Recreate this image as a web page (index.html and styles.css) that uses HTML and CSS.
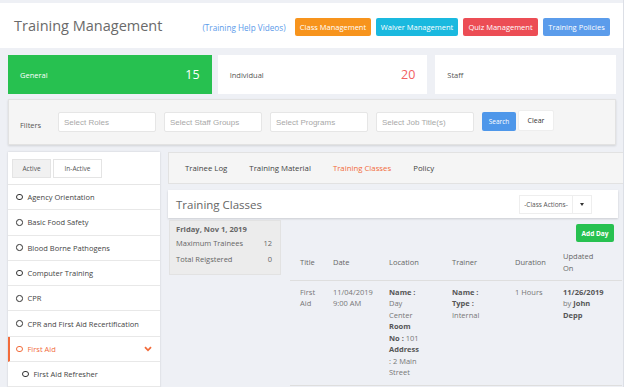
FILE: index.html
```html
<!DOCTYPE html>
<html lang="en">
<head>
    <meta charset="UTF-8">
    <meta name="viewport" content="width=device-width, initial-scale=1.0">
    <title>Training Management</title>
    <link rel="stylesheet" href="styles.css">
</head>
<body>
<div class="page">

    <div class="topbar">
        <h1>Training Management</h1>
        <a class="help-link" href="#">(Training Help Videos)</a>
        <div class="top-buttons">
            <button class="btn btn-orange">Class Management</button>
            <button class="btn btn-cyan">Waiver Management</button>
            <button class="btn btn-red">Quiz Management</button>
            <button class="btn btn-blue">Training Policies</button>
        </div>
    </div>

    <div class="content">
        <div class="stats">
            <div class="stat stat-general"><span>General</span><span class="stat-num">15</span></div>
            <div class="stat stat-individual"><span>Individual</span><span class="stat-num red">20</span></div>
            <div class="stat stat-staff"><span>Staff</span></div>
        </div>

        <div class="filters">
            <span class="filters-label">Filters</span>
            <input type="text" placeholder="Select Roles">
            <input type="text" placeholder="Select Staff Groups">
            <input type="text" placeholder="Select Programs">
            <input type="text" placeholder="Select Job Title(s)">
            <button class="btn-search">Search</button>
            <button class="btn-clear">Clear</button>
        </div>

        <div class="main">
            <div class="sidebar">
                <div class="toggle">
                    <button class="toggle-btn active">Active</button>
                    <button class="toggle-btn">In-Active</button>
                </div>
                <ul class="course-list">
                    <li><span class="dot"></span>Agency Orientation</li>
                    <li><span class="dot"></span>Basic Food Safety</li>
                    <li><span class="dot"></span>Blood Borne Pathogens</li>
                    <li><span class="dot"></span>Computer Training</li>
                    <li><span class="dot"></span>CPR</li>
                    <li><span class="dot"></span>CPR and First Aid Recertification</li>
                    <li class="selected"><span class="dot"></span>First Aid
                        <svg class="chevron" width="8" height="6" viewBox="0 0 8 6"><path d="M1 1.2 L4 4.3 L7 1.2" fill="none" stroke="#f26b3a" stroke-width="1.8"/></svg>
                    </li>
                    <li class="sub"><span class="dot"></span>First Aid Refresher</li>
                </ul>
            </div>

            <div class="panel">
                <div class="tabs">
                    <a href="#">Trainee Log</a>
                    <a href="#">Training Material</a>
                    <a href="#" class="current">Training Classes</a>
                    <a href="#">Policy</a>
                </div>

                <div class="classes-head">
                    <h2>Training Classes</h2>
                    <div class="actions">
                        <span class="actions-label">-Class Actions-</span>
                        <span class="actions-caret"></span>
                    </div>
                </div>

                <div class="classes-body">
                    <div class="day-info">
                        <div class="day-title">Friday, Nov 1, 2019</div>
                        <div class="day-row"><span>Maximum Trainees</span><span>12</span></div>
                        <div class="day-row"><span>Total Reigstered</span><span>0</span></div>
                    </div>

                    <div class="day-detail">
                        <div class="add-row"><button class="btn-add">Add Day</button></div>
                        <table class="class-table">
                            <thead>
                                <tr>
                                    <th class="c-title">Title</th>
                                    <th class="c-date">Date</th>
                                    <th class="c-loc">Location</th>
                                    <th class="c-trainer">Trainer</th>
                                    <th class="c-dur">Duration</th>
                                    <th class="c-upd">Updated On</th>
                                </tr>
                            </thead>
                            <tbody>
                                <tr>
                                    <td class="c-title">First Aid</td>
                                    <td class="c-date">11/04/2019 9:00 AM</td>
                                    <td class="c-loc"><b>Name :</b> Day Center <b>Room No :</b> 101 <b>Address</b> : 2 Main Street</td>
                                    <td class="c-trainer"><b>Name :</b><br><b>Type :</b> Internal</td>
                                    <td class="c-dur">1 Hours</td>
                                    <td class="c-upd"><b>11/26/2019</b> by <b>John Depp</b></td>
                                </tr>
                            </tbody>
                        </table>
                    </div>
                </div>
            </div>
        </div>
    </div>

</div>
</body>
</html>
```

FILE: styles.css
```css
body {
    margin: 0;
    background-color: #ffffff;
    font-family: "Open Sans", sans-serif;
    color: #555;
}
button {
    white-space: nowrap;
    cursor: pointer;
}
.page {
    width: 624px;
    height: 387px;
    overflow: hidden;
    background-color: #eef0f5;
    border-right: 1px solid #dcdfe6;
    padding-top: 3px;
    box-sizing: border-box;
}
.topbar {
    background-color: #fff;
    height: 45px;
    display: flex;
    align-items: center;
    padding: 0 13px 0 14px;
    box-sizing: border-box;
    white-space: nowrap;
}
h1 {
    margin: 0 0 1px;
    font-size: 14.5px;
    font-weight: normal;
    color: #6a6a6a;
    flex-shrink: 0;
}
.help-link {
    margin-left: 40px;
    margin-top: 3px;
    font-size: 8.2px;
    color: #5b9bea;
    text-decoration: none;
    flex-shrink: 0;
}
.top-buttons {
    margin-left: auto;
    margin-top: 3px;
    display: flex;
    gap: 5px;
    flex-shrink: 0;
}
.btn {
    font-family: "Open Sans", sans-serif;
    font-size: 7.5px;
    color: #fff;
    border: none;
    border-radius: 2px;
    height: 18px;
    padding: 0;
}
.btn-orange { background-color: #f7941d; width: 76px; }
.btn-cyan { background-color: #1ab9df; width: 82px; }
.btn-red { background-color: #ec4d55; width: 75px; }
.btn-blue { background-color: #5b9ceb; width: 67px; }

.content {
    padding: 7px 7px 0 8px;
}
.stats {
    display: flex;
    gap: 6px;
}
.stat {
    height: 39px;
    background-color: #fff;
    display: flex;
    align-items: center;
    justify-content: space-between;
    padding: 0 12px;
    box-sizing: border-box;
    font-size: 7.5px;
    color: #555;
}
.stat-general {
    width: 204px;
    background-color: #27c150;
    color: #fff;
}
.stat-individual { width: 210px; }
.stat-staff { width: 181px; margin-left: 2px; }
.stat-num {
    font-size: 12.5px;
}
.red { color: #f2605f; }

.filters {
    margin-top: 5px;
    height: 46px;
    background-color: #f5f5f5;
    border: 1px solid #e2e2e2;
    box-shadow: 0 1px 2px rgba(0, 0, 0, 0.12);
    display: flex;
    align-items: center;
    padding: 0 0 0 11px;
    box-sizing: border-box;
}
.filters-label {
    font-size: 7.5px;
    color: #555;
    width: 38px;
    flex-shrink: 0;
    margin-top: 5px;
}
.filters input {
    width: 98px;
    height: 20px;
    border: 1px solid #e6e6e6;
    border-radius: 2px;
    background-color: #fff;
    font-family: "Liberation Sans", Arial, sans-serif;
    font-size: 8px;
    padding: 0 5px;
    margin-right: 8px;
    box-sizing: border-box;
    flex-shrink: 0;
}
.filters input::placeholder { color: #a8a8a8; }
.btn-search {
    width: 34px;
    height: 19px;
    background-color: #4e97ea;
    color: #fff;
    border: none;
    border-radius: 2px;
    font-size: 6.5px;
    font-family: "Open Sans", sans-serif;
    margin-top: -2px;
    padding: 0;
}
.btn-clear {
    width: 36px;
    height: 21px;
    margin-left: 2px;
    background-color: #fff;
    color: #333;
    border: 1px solid #eee;
    border-radius: 2px;
    font-size: 7px;
    font-family: "Open Sans", sans-serif;
    margin-top: -3px;
    padding: 0;
}

.main {
    display: flex;
    gap: 8px;
    margin-top: 7px;
}
.sidebar {
    width: 152px;
    height: 240px;
    background-color: #fff;
    box-shadow: 0 0 2px rgba(0, 0, 0, 0.15);
    flex-shrink: 0;
}
.toggle {
    display: flex;
    gap: 2px;
    padding: 7px 4px 6px;
    border-bottom: 1px solid #e6e6e6;
}
.toggle-btn {
    height: 19px;
    border: 1px solid #e4e4e4;
    background-color: #fff;
    font-family: "Open Sans", sans-serif;
    font-size: 6.5px;
    color: #555;
    width: 49px;
    padding: 0;
}
.toggle-btn.active {
    background-color: #f1f1f1;
    width: 39px;
}
.course-list {
    list-style: none;
    margin: 0;
    padding: 0;
}
.course-list li {
    height: 25.3px;
    display: flex;
    align-items: center;
    padding-left: 8px;
    border-bottom: 1px solid #e8e8e8;
    font-size: 7.5px;
    color: #444;
    box-sizing: border-box;
}
.dot {
    width: 4.5px;
    height: 4.5px;
    border: 1.4px solid #333;
    border-radius: 50%;
    margin-right: 5px;
}
.course-list li.selected {
    color: #f26b3a;
    border-left: 2px solid #f26b3a;
    padding-left: 6px;
}
.course-list li.selected .dot { border-color: #f26b3a; }
.chevron {
    margin-left: auto;
    margin-right: 8px;
}
.course-list li.sub { padding-left: 14px; }

.panel {
    width: 457px;
    flex-shrink: 0;
}
.tabs {
    height: 32px;
    background-color: #f5f5f5;
    border: 1px solid #e2e2e2;
    box-sizing: border-box;
    display: flex;
    align-items: center;
    padding-left: 16px;
    gap: 22px;
}
.tabs a {
    font-size: 7.8px;
    color: #444;
    text-decoration: none;
}
.tabs a.current { color: #f26b3a; }

.classes-head {
    margin-top: 6px;
    width: 450px;
    height: 28px;
    background-color: #fff;
    box-shadow: 0 1px 2px rgba(0, 0, 0, 0.15);
    display: flex;
    align-items: center;
    padding: 0 26px 0 8px;
    box-sizing: border-box;
}
h2 {
    margin: 0;
    font-size: 11.5px;
    font-weight: normal;
    color: #666;
}
.actions {
    margin-left: auto;
    display: flex;
    height: 19px;
    border: 1px solid #eee;
    box-sizing: border-box;
}
.actions-label {
    width: 52px;
    font-size: 6.5px;
    color: #555;
    display: flex;
    align-items: center;
    justify-content: center;
    border-right: 1px solid #eee;
}
.actions-caret {
    width: 18px;
    position: relative;
}
.actions-caret::after {
    content: "";
    position: absolute;
    left: 7px;
    top: 7px;
    border-left: 2.5px solid transparent;
    border-right: 2.5px solid transparent;
    border-top: 3px solid #333;
}

.classes-body {
    display: flex;
    margin-top: 2px;
}
.day-info {
    width: 112px;
    height: 55px;
    background-color: #ececec;
    border: 1px solid #e2e2e2;
    box-sizing: border-box;
    padding: 3px 6px;
    font-size: 7.5px;
    color: #666;
    margin-left: 1px;
}
.day-title {
    font-weight: bold;
    font-size: 7.6px;
    margin-bottom: 2px;
}
.day-row {
    display: flex;
    justify-content: space-between;
    line-height: 15.5px;
    padding-right: 2px;
}
.day-detail {
    flex: 1;
    padding-left: 9px;
}
.add-row {
    display: flex;
    justify-content: flex-end;
    padding: 4px 11px 0 0;
}
.btn-add {
    width: 38px;
    height: 18px;
    background-color: #27c150;
    color: #fff;
    border: none;
    border-radius: 2px;
    font-size: 6.5px;
    font-family: "Open Sans", sans-serif;
    font-weight: bold;
    padding: 0;
}
.class-table {
    border-collapse: collapse;
    table-layout: fixed;
    width: 332px;
    margin-top: 2px;
    font-size: 7.5px;
    color: #777;
}
.class-table th,
.class-table td {
    box-sizing: border-box;
    padding-left: 10px;
    line-height: 11.5px;
    border-bottom: 1px solid #dedede;
    text-align: left;
}
.class-table th {
    font-weight: normal;
    color: #666;
    vertical-align: middle;
    height: 36px;
    padding-top: 3px;
}
.class-table td {
    vertical-align: top;
    padding-top: 6px;
    height: 105px;
}
.class-table b { color: #555; }
.c-title { width: 33px; padding-right: 3px; }
.c-date { width: 56px; padding-right: 4px; }
.c-loc { width: 63px; padding-right: 22px; }
.c-trainer { width: 63px; padding-right: 22px; }
.c-dur { width: 48px; padding-right: 4px; }
.c-upd { width: 69px; padding-right: 17px; }
```
